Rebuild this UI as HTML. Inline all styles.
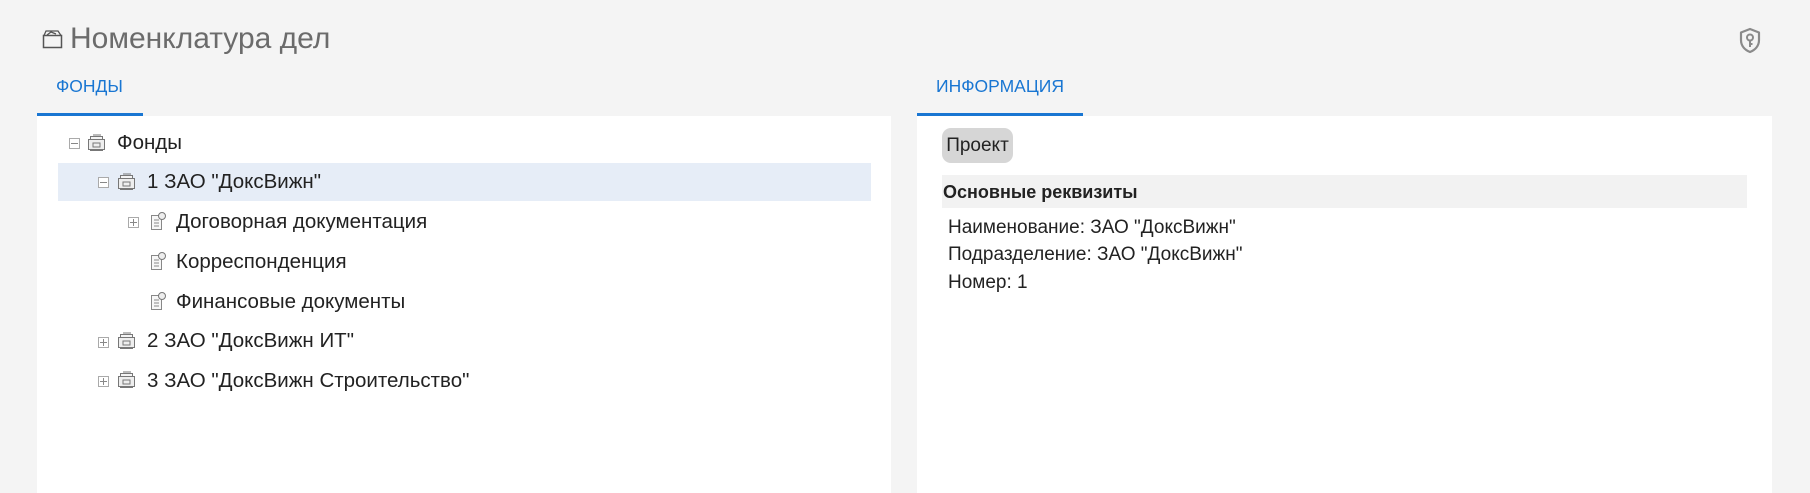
<!DOCTYPE html>
<html><head><meta charset="utf-8"><style>
*{margin:0;padding:0;box-sizing:border-box}
body{width:1810px;height:493px;background:#f4f4f4;font-family:"Liberation Sans",Arial,sans-serif;position:relative;overflow:hidden;color:#222}
.a{position:absolute}
.title{left:70px;top:21px;font-size:30px;color:#6b6b6b;line-height:36px;white-space:nowrap}
.tab{font-size:17.5px;color:#1976d2;line-height:20px}
.ul{height:3px;background:#1976d2}
.panel{background:#fff}
.row{position:absolute;font-size:20.5px;line-height:22px;white-space:nowrap;color:#222}
.pm{position:absolute;width:11px;height:11px;border:1px solid #aaa;background:#fff}
.pm:before{content:"";position:absolute;left:1px;right:1px;top:4px;height:1px;background:#888}
.pm.p:after{content:"";position:absolute;top:1px;bottom:1px;left:4px;width:1px;background:#888}
.info{font-size:19px;line-height:22px;white-space:nowrap;color:#222}
</style></head><body>
<svg class="a" style="left:42px;top:29px" width="21" height="20" viewBox="0 0 21 20"><rect x="1.5" y="6.5" width="18" height="12" fill="none" stroke="#555" stroke-width="1.5"/><path d="M2 6.5 L4 2 L16 2 L19 6.5 M5 6 L9 3 L14 5" fill="none" stroke="#555" stroke-width="1.3"/></svg>
<div class="a title">Номенклатура дел</div>
<svg class="a" style="left:1738px;top:27px" width="24" height="27" viewBox="0 0 24 27"><path d="M12 2 L21 5.5 V13 C21 19 17 23 12 25 C7 23 3 19 3 13 V5.5 Z" fill="none" stroke="#8a8a8a" stroke-width="2.2" stroke-linejoin="round"/><circle cx="12" cy="10.5" r="3" fill="none" stroke="#8a8a8a" stroke-width="2"/><path d="M12 13.5 V20 M12 17 H14.5" stroke="#8a8a8a" stroke-width="2" fill="none"/></svg>

<div class="a tab" style="left:56px;top:76px">ФОНДЫ</div>
<div class="a ul" style="left:37px;top:113px;width:106px"></div>
<div class="a tab" style="left:936px;top:76px">ИНФОРМАЦИЯ</div>
<div class="a ul" style="left:917px;top:113px;width:166px"></div>

<div class="a panel" style="left:37px;top:116px;width:854px;height:377px"></div>
<div class="a panel" style="left:917px;top:116px;width:855px;height:377px"></div>

<div class="a" style="left:58px;top:163px;width:813px;height:38px;background:#e6edf7"></div>

<svg width="0" height="0" style="position:absolute"><defs>
<g id="fi"><rect x="3.5" y="3.5" width="12" height="14" fill="#f4f4f4" stroke="#777"/><rect x="1.5" y="6.5" width="16" height="10" fill="#eee" stroke="#777"/><rect x="6" y="10" width="7" height="4" fill="none" stroke="#777"/><path d="M6 2h8" stroke="#777"/></g>
<g id="di"><path d="M3.5 4.5h10v14h-10z" fill="#f7f7f7" stroke="#888"/><circle cx="14" cy="5" r="3.5" fill="#eee" stroke="#777"/><path d="M6 9h5M6 12h5M6 15h5" stroke="#888"/></g>
</defs></svg>

<div class="pm" style="left:69px;top:138px"></div>
<svg class="a" style="left:87px;top:133px" width="20" height="20"><use href="#fi"/></svg>
<div class="row" style="left:117px;top:132px">Фонды</div>

<div class="pm" style="left:98px;top:177px"></div>
<svg class="a" style="left:117px;top:172px" width="20" height="20"><use href="#fi"/></svg>
<div class="row" style="left:147px;top:171px">1 ЗАО "ДоксВижн"</div>

<div class="pm p" style="left:128px;top:217px"></div>
<svg class="a" style="left:148px;top:211px" width="20" height="21"><use href="#di"/></svg>
<div class="row" style="left:176px;top:211px">Договорная документация</div>

<svg class="a" style="left:148px;top:251px" width="20" height="21"><use href="#di"/></svg>
<div class="row" style="left:176px;top:251px">Корреспонденция</div>

<svg class="a" style="left:148px;top:291px" width="20" height="21"><use href="#di"/></svg>
<div class="row" style="left:176px;top:291px">Финансовые документы</div>

<div class="pm p" style="left:98px;top:337px"></div>
<svg class="a" style="left:117px;top:331px" width="20" height="20"><use href="#fi"/></svg>
<div class="row" style="left:147px;top:330px">2 ЗАО "ДоксВижн ИТ"</div>

<div class="pm p" style="left:98px;top:376px"></div>
<svg class="a" style="left:117px;top:370px" width="20" height="20"><use href="#fi"/></svg>
<div class="row" style="left:147px;top:370px">3 ЗАО "ДоксВижн Строительство"</div>

<div class="a info" style="left:942px;top:128px;width:71px;height:35px;background:#d6d6d6;border-radius:9px;text-align:center;line-height:35px">Проект</div>
<div class="a" style="left:942px;top:175px;width:805px;height:33px;background:#f2f2f2"></div>
<div class="a info" style="left:943px;top:181px;font-weight:bold;font-size:18px">Основные реквизиты</div>
<div class="a info" style="left:948px;top:217px">Наименование: ЗАО "ДоксВижн"</div>
<div class="a info" style="left:948px;top:244px">Подразделение: ЗАО "ДоксВижн"</div>
<div class="a info" style="left:948px;top:272px">Номер: 1</div>
</body></html>
